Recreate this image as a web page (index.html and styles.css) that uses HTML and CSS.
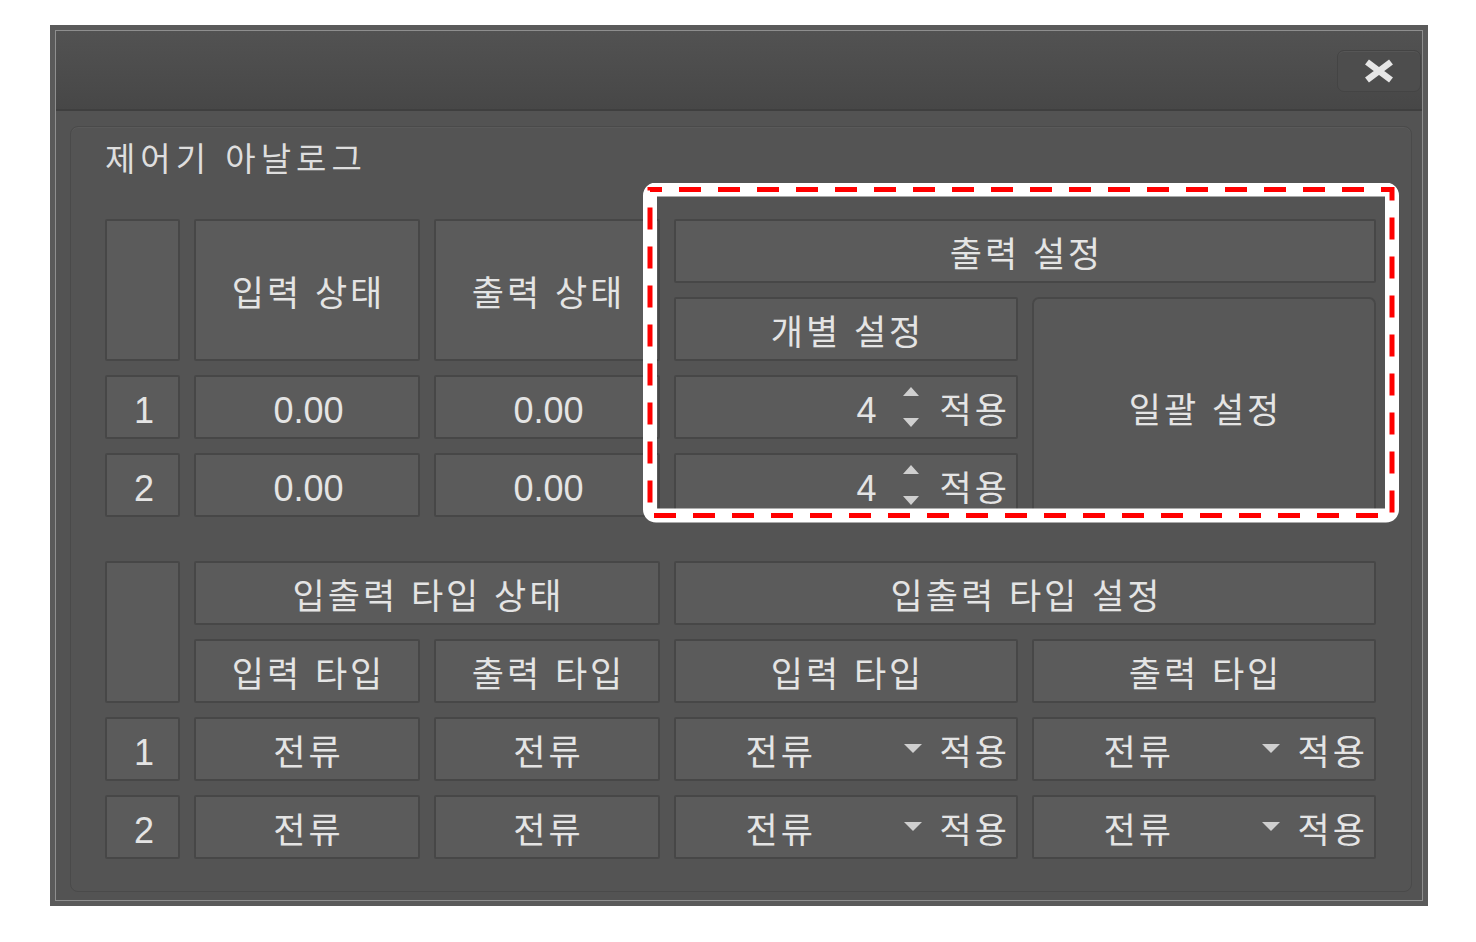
FILE: index.html
```html
<!DOCTYPE html>
<html lang="ko">
<head>
    <meta charset="utf-8">
    <link rel="stylesheet" href="styles.css">
    <title>제어기 아날로그</title>
</head>
<body>
<div class="window">
    <div class="window-frame">
        <div class="title-bar">
            <button class="close-button">
                <svg width="32" height="24" viewBox="0 0 32 24"><path d="M4 3 L28 21 M28 3 L4 21" stroke="#e6e6e6" stroke-width="6.5"/></svg>
            </button>
        </div>
        <div class="window-body">
            <div class="group">
                <h2 class="group-title">제어기 아날로그</h2>

                <!-- 상태 / 출력 설정 -->
                <div class="grid">
                    <div class="cell rows-2"></div>
                    <div class="cell rows-2">입력 상태</div>
                    <div class="cell rows-2">출력 상태</div>
                    <div class="cell cols-2">출력 설정</div>
                    <div class="cell">개별 설정</div>
                    <div class="cell bulk-button rows-3">일괄 설정</div>

                    <div class="cell num">1</div>
                    <div class="cell num">0.00</div>
                    <div class="cell num">0.00</div>
                    <div class="cell spin-cell">
                        <span class="num">4</span>
                        <svg class="spinner" width="20" height="46" viewBox="0 0 20 46"><path d="M10 3 L18 12 L2 12 Z M2 34 L18 34 L10 43 Z" fill="#cfcfcf"/></svg>
                        <span>적용</span>
                    </div>

                    <div class="cell num">2</div>
                    <div class="cell num">0.00</div>
                    <div class="cell num">0.00</div>
                    <div class="cell spin-cell">
                        <span class="num">4</span>
                        <svg class="spinner" width="20" height="46" viewBox="0 0 20 46"><path d="M10 3 L18 12 L2 12 Z M2 34 L18 34 L10 43 Z" fill="#cfcfcf"/></svg>
                        <span>적용</span>
                    </div>
                </div>

                <!-- 입출력 타입 -->
                <div class="grid grid-types">
                    <div class="cell rows-2"></div>
                    <div class="cell cols-2">입출력 타입 상태</div>
                    <div class="cell cols-2">입출력 타입 설정</div>
                    <div class="cell">입력 타입</div>
                    <div class="cell">출력 타입</div>
                    <div class="cell">입력 타입</div>
                    <div class="cell">출력 타입</div>

                    <div class="cell num">1</div>
                    <div class="cell">전류</div>
                    <div class="cell">전류</div>
                    <div class="cell select-cell">
                        <span class="select-value">전류</span>
                        <svg class="caret" width="20" height="10" viewBox="0 0 20 10"><path d="M1 1 L19 1 L10 10 Z" fill="#cfcfcf"/></svg>
                        <span>적용</span>
                    </div>
                    <div class="cell select-cell">
                        <span class="select-value">전류</span>
                        <svg class="caret" width="20" height="10" viewBox="0 0 20 10"><path d="M1 1 L19 1 L10 10 Z" fill="#cfcfcf"/></svg>
                        <span>적용</span>
                    </div>

                    <div class="cell num">2</div>
                    <div class="cell">전류</div>
                    <div class="cell">전류</div>
                    <div class="cell select-cell">
                        <span class="select-value">전류</span>
                        <svg class="caret" width="20" height="10" viewBox="0 0 20 10"><path d="M1 1 L19 1 L10 10 Z" fill="#cfcfcf"/></svg>
                        <span>적용</span>
                    </div>
                    <div class="cell select-cell">
                        <span class="select-value">전류</span>
                        <svg class="caret" width="20" height="10" viewBox="0 0 20 10"><path d="M1 1 L19 1 L10 10 Z" fill="#cfcfcf"/></svg>
                        <span>적용</span>
                    </div>
                </div>
            </div>
        </div>
    </div>
</div>

<!-- 강조 표시 (점선 박스) -->
<svg class="highlight" width="757" height="340" viewBox="0 0 757 340">
    <rect x="7" y="6.5" width="742" height="326" rx="6" fill="none" stroke="#ffffff" stroke-width="14"/>
    <rect x="7" y="6.5" width="742" height="326" fill="none" stroke="#ff0000" stroke-width="5" stroke-dasharray="22 17" stroke-dashoffset="10"/>
</svg>
</body>
</html>
```

FILE: styles.css
```css
body {
  margin: 0;
  background-color: #ffffff;
  font-family: "Noto Sans CJK KR", "Noto Sans", sans-serif;
  color: #e4e4e4;
}

.window {
  width: 1378px;
  box-sizing: border-box;
  margin: 25px 0 0 50px;
  border: 5px solid #5a5a5a;
}

.window-frame {
  border: 1px solid #8e8e8e;
}

.title-bar {
  height: 78px;
  display: flex;
  justify-content: flex-end;
  align-items: center;
  padding-right: 1px;
  background: linear-gradient(#525252, #474747);
  border-bottom: 2px solid #3f3f3f;
}

.close-button {
  width: 84px;
  height: 42px;
  margin-top: 2px;
  display: flex;
  align-items: center;
  justify-content: center;
  background-color: #4d4d4d;
  border: 1px solid #444444;
  border-radius: 7px;
  box-shadow: inset 0 1px 0 #565656;
  padding: 0;
}

.window-body {
  background-color: #535353;
  padding: 15px 10px 8px 14px;
}

.group {
  border: 1px solid #4a4a4a;
  border-radius: 8px;
  background-color: #545454;
  padding: 0 35px 32px 34px;
  box-shadow: inset 0 1px 0 #5a5a5a;
}

.group-title {
  margin: 0;
  height: 60px;
  line-height: 60px;
  font-size: 33px;
  font-weight: normal;
  letter-spacing: 5px;
  color: #dedede;
}

.grid {
  display: grid;
  grid-template-columns: 75px 226px 226px 344px 344px;
  grid-auto-rows: 64px;
  gap: 14px;
  margin-top: 32px;
}

.grid-types {
  margin-top: 44px;
}

.cell {
  display: flex;
  align-items: center;
  justify-content: center;
  padding-left: 3px;
  background-color: #5b5b5b;
  border: 2px solid #474747;
  border-radius: 2px;
  font-size: 35px;
  line-height: 1;
  letter-spacing: 3px;
  white-space: nowrap;
}

.rows-2 {
  grid-row: span 2;
}

.rows-3 {
  grid-row: span 3;
}

.cols-2 {
  grid-column: span 2;
}

.num {
  font-family: "Liberation Sans", Arial, sans-serif;
  font-size: 36px;
  letter-spacing: 0;
  padding-top: 7px;
}

.bulk-button {
  background-color: #585858;
  border-radius: 7px;
  border-color: #484848;
}

.spin-cell {
  justify-content: flex-end;
  padding-right: 6px;
}

.spinner {
  margin: 0 19px 0 24px;
}

.select-cell {
  justify-content: flex-end;
  padding-left: 0;
  padding-right: 6px;
}

.select-value {
  flex: 1;
  text-align: center;
}

.caret {
  margin: 0 17px 2px 17px;
}

/* 강조 표시 */
.highlight {
  position: absolute;
  left: 643px;
  top: 183px;
}
```
